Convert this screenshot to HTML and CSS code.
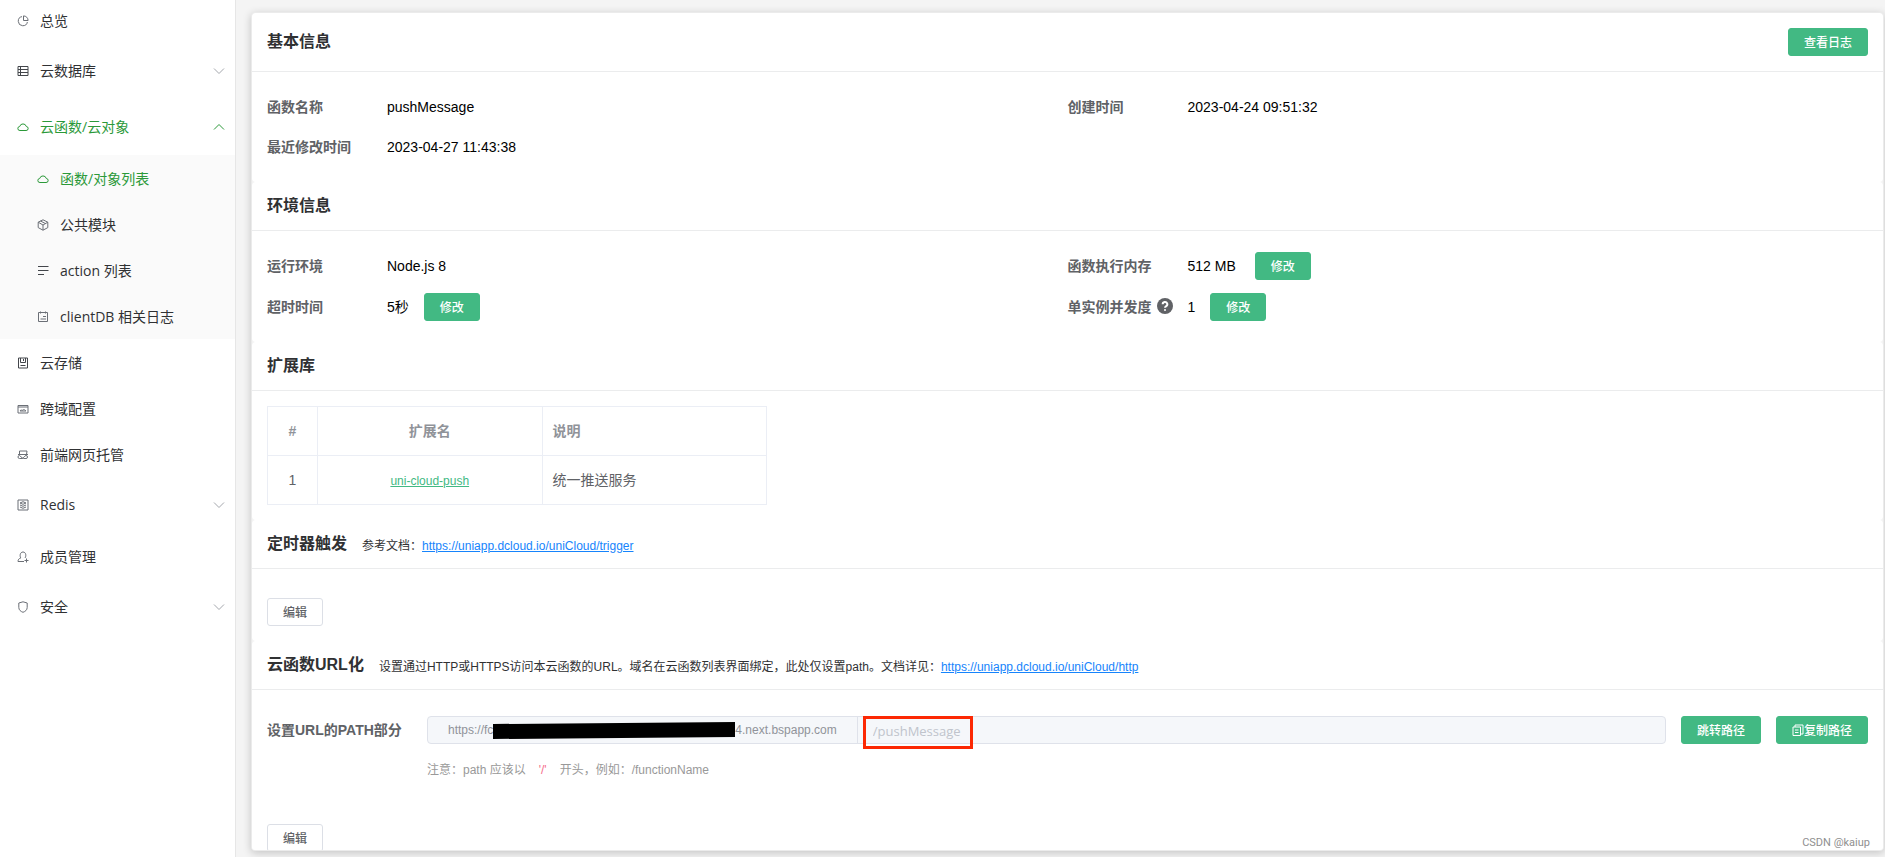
FILE: index.html
```html
<!DOCTYPE html>
<html lang="zh-CN">
<head>
<meta charset="utf-8">
<title>云函数详情</title>
<link rel="stylesheet" href="styles.css">
</head>
<body>
<div class="app">
  <nav class="sidebar">
    <ul class="menu">
      <li><a class="item item-first" href="#"><svg class="icon" viewBox="0 0 12 12"><path d="M5 1.600A4.600 4.600 0 1 0 10.400 7"/><path d="M6.500.9v4.600h4.600A4.600 4.600 0 0 0 6.500.9z"/></svg><span>总览</span></a></li>
      <li><a class="item item-tall" href="#"><svg class="icon icon-dark" viewBox="0 0 12 12"><path d="M1 1.500h10v9H1zM1 4.500h10M1 7.500h10M3.500 1.500v9"/></svg><span>云数据库</span><svg class="arrow" viewBox="0 0 12 12"><path d="M1 3.500l5 5 5-5"/></svg></a></li>
      <li><a class="item item-tall active" href="#"><svg class="icon" viewBox="0 0 12 12"><path d="M3 9.500a2 2 0 0 1-.3-4 3.400 3.400 0 0 1 6.600 0 2 2 0 0 1-.3 4z"/></svg><span>云函数/云对象</span><svg class="arrow" viewBox="0 0 12 12"><path d="M1 8.500l5-5 5 5"/></svg></a>
        <ul class="submenu">
          <li><a class="item active" href="#"><svg class="icon" viewBox="0 0 12 12"><path d="M3 9.500a2 2 0 0 1-.3-4 3.400 3.400 0 0 1 6.600 0 2 2 0 0 1-.3 4z"/></svg><span>函数/对象列表</span></a></li>
          <li><a class="item" href="#"><svg class="icon" viewBox="0 0 12 12"><path d="M6 .8l4.800 2.400v5.400L6 11.200 1.200 8.600V3.200zM1.200 3.200L6 6l4.800-2.800M6 6v5.200M3.500 2l5 2.600"/></svg><span>公共模块</span></a></li>
          <li><a class="item" href="#"><svg class="icon icon-dark" viewBox="0 0 12 12"><path d="M1 1.500h10.500M1 5.500h10.500M1 9.500h6"/></svg><span>action 列表</span></a></li>
          <li><a class="item" href="#"><svg class="icon" viewBox="0 0 12 12"><path d="M1.500 1.500h9v9h-9zM3.500.5v2M8.500.5v2M6 5.500h3M3.500 8h5.500"/></svg><span>clientDB 相关日志</span></a></li>
        </ul>
      </li>
      <li><a class="item" href="#"><svg class="icon icon-dark" viewBox="0 0 12 12"><path d="M1.500 1h9v10h-9zM3.500 1v4.500h5V1M6.500 2v2M3.500 8.500h5"/></svg><span>云存储</span></a></li>
      <li><a class="item" href="#"><svg class="icon" viewBox="0 0 12 12"><path d="M1 2.500h10v7.500H1zM1 4h10M3 8c1-2 2 0 3-1s2 0 3 1z"/></svg><span>跨域配置</span></a></li>
      <li><a class="item" href="#"><svg class="icon" viewBox="0 0 12 12"><path d="M2.500 5.500v-3.500h7.500l-.5 3.500M1 5.500h10M2.500 9.500a1.500 1.500 0 0 1 0-3c1 0 2 3 4 3h2.500a1.500 1.500 0 0 0 0-3c-1.500 0-2 2.500-4 3z"/></svg><span>前端网页托管</span></a></li>
      <li><a class="item item-tall" href="#"><svg class="icon" viewBox="0 0 12 12"><path d="M1 1h10v10H1zM3 4l3-1.300L9 4 6 5.300zM3 6l3 1.300L9 6M3 8l3 1.300L9 8"/></svg><span>Redis</span><svg class="arrow" viewBox="0 0 12 12"><path d="M1 3.500l5 5 5-5"/></svg></a></li>
      <li><a class="item" href="#"><svg class="icon" viewBox="0 0 12 12"><path d="M7 10.500H1c0-2 1-3 2.800-3.500C2.500 5 3 1 6 1s3.500 4 2 6M9.500 7.500v4M7.500 9.500h4"/></svg><span>成员管理</span></a></li>
      <li><a class="item item-tall" href="#"><svg class="icon" viewBox="0 0 12 12"><path d="M6 .8l4.200 1.200v4.500c0 2.500-2 4-4.200 4.800-2.200-.8-4.200-2.300-4.200-4.800V2z"/></svg><span>安全</span><svg class="arrow" viewBox="0 0 12 12"><path d="M1 3.500l5 5 5-5"/></svg></a></li>
    </ul>
  </nav>

  <main class="main">
    <div class="panel">
      <section class="card">
        <header class="card-head"><h2>基本信息</h2><button class="btn btn-primary push" type="button">查看日志</button></header>
        <dl class="card-body info">
          <div class="row"><dt>函数名称</dt><dd>pushMessage</dd></div>
          <div class="row"><dt>创建时间</dt><dd>2023-04-24 09:51:32</dd></div>
          <div class="row"><dt>最近修改时间</dt><dd>2023-04-27 11:43:38</dd></div>
        </dl>
      </section>

      <section class="card">
        <header class="card-head"><h2>环境信息</h2></header>
        <dl class="card-body info info-env">
          <div class="row"><dt>运行环境</dt><dd>Node.js 8</dd></div>
          <div class="row"><dt>函数执行内存</dt><dd class="with-unit">512 MB<button class="btn btn-primary" type="button">修改</button></dd></div>
          <div class="row"><dt>超时时间</dt><dd>5秒<button class="btn btn-primary" type="button">修改</button></dd></div>
          <div class="row"><dt>单实例并发度<svg class="help" viewBox="0 0 16 16"><circle cx="8" cy="8" r="8"/><path d="M5.700 6.300a2.300 2.300 0 1 1 3.500 1.900c-.8.500-1.200.8-1.200 1.600M8 11.200v1.600"/></svg></dt><dd>1<button class="btn btn-primary" type="button">修改</button></dd></div>
        </dl>
      </section>

      <section class="card">
        <header class="card-head"><h2>扩展库</h2></header>
        <div class="card-body">
          <table class="table">
            <colgroup><col class="col-index"><col><col></colgroup>
            <thead><tr><th>#</th><th>扩展名</th><th class="left">说明</th></tr></thead>
            <tbody><tr><td>1</td><td><a class="link-green" href="#">uni-cloud-push</a></td><td class="left">统一推送服务</td></tr></tbody>
          </table>
        </div>
      </section>

      <section class="card">
        <header class="card-head"><h2>定时器触发</h2><p class="desc">参考文档：<a href="#">https://uniapp.dcloud.io/uniCloud/trigger</a></p></header>
        <div class="card-body edit-area"><button class="btn" type="button">编辑</button></div>
      </section>

      <section class="card">
        <header class="card-head"><h2>云函数URL化</h2><p class="desc">设置通过HTTP或HTTPS访问本云函数的URL。域名在云函数列表界面绑定，此处仅设置path。文档详见：<a href="#">https://uniapp.dcloud.io/uniCloud/http</a></p></header>
        <div class="card-body url-area">
          <div class="url-row">
            <label class="url-label" for="path">设置URL的PATH部分</label>
            <div class="input-group">
              <span class="prepend">https://fc<svg class="redact" viewBox="0 0 242 17" preserveAspectRatio="none"><path d="M0 2L242 0v15L0 17z"/></svg>4.next.bspapp.com</span>
              <span class="field"><input id="path" type="text" placeholder="/pushMessage" disabled><span class="highlight"></span></span>
            </div>
            <button class="btn btn-primary" type="button">跳转路径</button>
            <button class="btn btn-primary" type="button"><svg class="copy" viewBox="0 0 12 12"><path d="M1 3h7.500v8.500H1zM3 3V1h8v9H8.500M3 6h3.500M3 8.500h3.500"/></svg>复制路径</button>
          </div>
          <p class="hint">注意：path 应该以<code>'/'</code>开头，例如：/functionName</p>
          <button class="btn" type="button">编辑</button>
        </div>
      </section>
    </div>
  </main>
  <div class="watermark">CSDN @kaiup</div>
</div>
</body>
</html>
```
FILE: styles.css
```css
* { box-sizing: border-box; }

body {
  margin: 0;
  font: 14px/20px "Liberation Sans", "Noto Sans CJK SC", sans-serif;
  color: #000;
  background: #f4f4f4;
}

h2, p, ul, dl, dd { margin: 0; }
ul { padding: 0; list-style: none; }

.app {
  position: relative;
  display: flex;
  height: 100vh;
  overflow: hidden;
}

/* Sidebar */
.sidebar {
  flex: none;
  width: 236px;
  background: #fff;
  border-right: 1px solid #e6e6e6;
  font-family: "Open Sans", "Noto Sans CJK SC", sans-serif;
}

.item {
  display: flex;
  align-items: center;
  gap: 11px;
  height: 46px;
  padding: 2px 10px 0 17px;
  color: #303133;
  text-decoration: none;
}
.item-first { height: 43px; padding-top: 0; padding-bottom: 2px; }
.item-tall { height: 56px; padding-top: 0; }
.item.active { color: #2b9939; }

.submenu { background: #fafafa; }
.submenu .item { padding-left: 37px; }

.icon, .arrow {
  flex: none;
  width: 12px;
  height: 12px;
  fill: none;
  stroke: #6b6f76;
}
.icon-dark { stroke: #43464b; }
.arrow {
  margin-left: auto;
  stroke: #a4a7ad;
}
.active .icon, .active .arrow { stroke: #2b9939; }

/* Content */
.main {
  flex: 1;
  min-width: 0;
  padding: 12px 1px 6px 15px;
}

.panel {
  height: 100%;
  overflow: hidden;
  background: #f4f4f4;
  border: 1px solid #ebebeb;
  border-radius: 4px;
  box-shadow: 0 2px 8px rgba(0, 0, 0, .2);
}

.card {
  background: #fff;
  border-radius: 4px;
}

.card-head {
  display: flex;
  align-items: center;
  gap: 15px;
  min-height: 49px;
  padding: 0 15px;
  border-bottom: 1px solid #ebeced;
}
.card-head:has(.push) { min-height: 59px; }
.push { margin-left: auto; }

h2 {
  font-size: 16px;
  line-height: 24px;
  font-weight: 700;
  color: #303133;
}

.desc {
  padding-top: 3px;
  font-size: 12px;
  color: #303133;
}
.desc a { color: #1684fc; }

.card-body { padding: 15px; }

.info {
  display: grid;
  grid-template-columns: 1fr 1fr;
}
.info-env { row-gap: 1px; }
.row {
  display: flex;
  align-items: center;
  height: 40px;
}
dt {
  display: flex;
  align-items: center;
  width: 120px;
  font-weight: 700;
  color: #606266;
}
dd {
  display: flex;
  align-items: center;
  gap: 15px;
}
.with-unit { gap: 19px; }

.help {
  width: 16px;
  height: 16px;
  margin-left: 5px;
  margin-bottom: 3px;
  fill: #606266;
}
.help path { fill: none; stroke: #fff; stroke-width: 2; }

.btn {
  flex: none;
  height: 28px;
  padding: 1px 15px 0;
  font: 12px/16px "Liberation Sans", "Noto Sans CJK SC", sans-serif;
  font-weight: 500;
  color: #606266;
  background: #fff;
  border: 1px solid #dcdfe6;
  border-radius: 3px;
}
.btn-primary {
  color: #fff;
  background: #42b983;
  border-color: #42b983;
}

/* Extension table */
.table {
  width: 500px;
  table-layout: fixed;
  border-collapse: collapse;
  text-align: center;
  color: #606266;
}
.col-index { width: 50px; }
.table th, .table td {
  height: 49px;
  padding: 0 10px;
  border: 1px solid #ebeef5;
}
.table th { color: #909399; }
.table .left { text-align: left; }
.link-green { font-size: 12px; color: #42b983; }

.edit-area { padding-top: 29px; }

/* URL form */
.url-area { padding-top: 26px; }
.url-row {
  display: flex;
  align-items: center;
  gap: 15px;
}
.url-label {
  width: 145px;
  font-weight: 700;
  color: #606266;
}
.input-group {
  display: flex;
  flex: 1;
  height: 28px;
  background: #f5f7fa;
  border: 1px solid #dfe2ea;
  border-radius: 4px;
}
.prepend {
  display: flex;
  align-items: center;
  padding: 0 20px;
  font-size: 12px;
  color: #909399;
  border-right: 1px solid #dfe2ea;
}
.redact {
  width: 242px;
  height: 17px;
}
.field {
  position: relative;
  flex: 1;
}
.field input {
  width: 100%;
  height: 26px;
  padding: 2px 15px 0;
  font: 13px "Open Sans", sans-serif;
  background: none;
  border: 0;
}
.field input::placeholder { color: #c0c4cc; opacity: 1; }
.highlight {
  position: absolute;
  left: 5px;
  top: -1px;
  width: 110px;
  height: 33px;
  border: 3px solid #fc2803;
}
.copy {
  width: 12px;
  height: 12px;
  vertical-align: -1px;
  fill: none;
  stroke: #fff;
}

.hint {
  margin: 16px 0 44px 160px;
  font-size: 12px;
  color: #999;
}
.hint code {
  margin: 0 13px;
  font-family: inherit;
  font-size: 12px;
  color: #f56c8c;
}

.watermark {
  position: absolute;
  right: 15px;
  bottom: 4px;
  font: 11px/20px Roboto, sans-serif;
  color: #8f8f8f;
}
```
